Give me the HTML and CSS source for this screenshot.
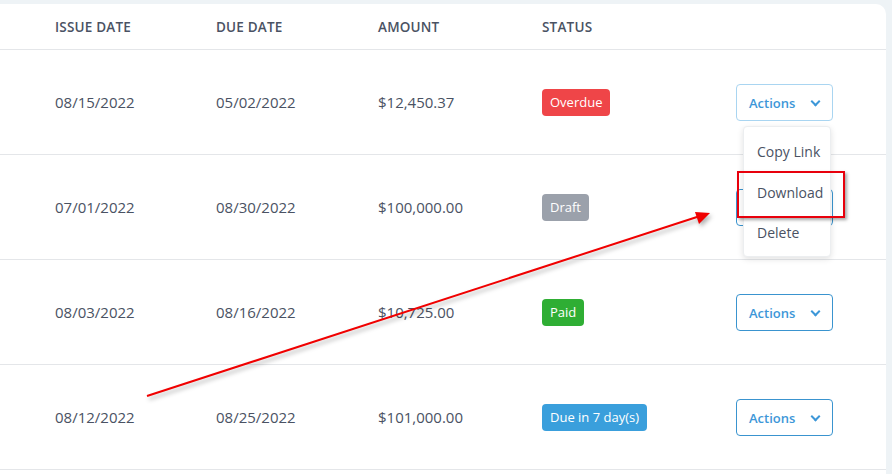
FILE: index.html
```html
<!DOCTYPE html>
<html>
<head>
  <title>invoices</title>
  <link rel="stylesheet" href="styles.css">
</head>
<body>

  <div class="card">
    <div class="row head">
      <div>Issue Date</div>
      <div>Due Date</div>
      <div>Amount</div>
      <div>Status</div>
      <div></div>
    </div>

    <div class="row">
      <div>08/15/2022</div>
      <div>05/02/2022</div>
      <div>$12,450.37</div>
      <div><span class="badge overdue">Overdue</span></div>
      <div class="actions-cell">
        <button class="actions open">Actions <span class="chev"></span></button>
        <!-- open menu -->
        <div class="menu">
          <div class="menu-item">Copy Link</div>
          <div class="menu-item">Download</div>
          <div class="menu-item">Delete</div>
        </div>
      </div>
    </div>

    <div class="row">
      <div>07/01/2022</div>
      <div>08/30/2022</div>
      <div>$100,000.00</div>
      <div><span class="badge draft">Draft</span></div>
      <div class="actions-cell">
        <button class="actions">Actions <span class="chev"></span></button>
      </div>
    </div>

    <div class="row">
      <div>08/03/2022</div>
      <div>08/16/2022</div>
      <div>$10,725.00</div>
      <div><span class="badge paid">Paid</span></div>
      <div class="actions-cell">
        <button class="actions">Actions <span class="chev"></span></button>
      </div>
    </div>

    <div class="row">
      <div>08/12/2022</div>
      <div>08/25/2022</div>
      <div>$101,000.00</div>
      <div><span class="badge due">Due in 7 day(s)</span></div>
      <div class="actions-cell">
        <button class="actions">Actions <span class="chev"></span></button>
      </div>
    </div>
  </div>

  <!-- screenshot annotations -->
  <div class="mark"></div>
  <svg class="arrow" width="892" height="474" viewBox="0 0 892 474">
    <line x1="147" y1="396" x2="700" y2="216" stroke="#f00000" stroke-width="2"/>
    <polygon points="710,213 695,212 699,224" fill="#f00000"/>
  </svg>

</body>
</html>
```

FILE: styles.css
```css
body {
  margin: 0;
  background-color: #eef3f6;
  font-family: "Open Sans", Arial, sans-serif;
  color: #4a5263;
  position: relative;
  height: 474px;
  overflow: hidden;
}

.card {
  background-color: #ffffff;
  margin: 4px 6px 0 -10px;
  padding-left: 10px;
  border-top-right-radius: 10px;
  height: 470px;
}

.row {
  display: grid;
  grid-template-columns: 161px 162px 164px 194px 100px;
  align-items: center;
  padding-left: 55px;
  height: 104px;
  border-bottom: 1px solid #e4e6e9;
  font-size: 15px;
}

.row.head {
  height: 44px;
  font-size: 13.5px;
  font-weight: 600;
  text-transform: uppercase;
  letter-spacing: 0.2px;
  padding-top: 1px;
}

.badge {
  display: inline-block;
  height: 27px;
  line-height: 27px;
  padding: 0 8px;
  border-radius: 4px;
  color: #ffffff;
  font-size: 13px;
}

.overdue { background-color: #ef4548; }
.draft { background-color: #9ba1ab; }
.paid { background-color: #2fae34; }
.due { background-color: #3a9fdc; }

.actions-cell {
  position: relative;
}

.actions {
  width: 97px;
  height: 37px;
  background-color: #ffffff;
  border: 1px solid #3a94cf;
  border-radius: 4px;
  color: #3d97d8;
  font-family: "Open Sans", Arial, sans-serif;
  font-size: 13px;
  font-weight: 600;
  text-align: left;
  padding: 0 0 0 12px;
  margin-top: 1px;
}

.actions.open {
  border-color: #a9d5f1;
}

.chev {
  display: inline-block;
  width: 5px;
  height: 5px;
  border-right: 2.5px solid #3d97d8;
  border-bottom: 2.5px solid #3d97d8;
  transform: rotate(45deg);
  margin-left: 13px;
  position: relative;
  top: -3px;
}

.menu {
  position: absolute;
  top: 43px;
  left: 7px;
  width: 88px;
  height: 131px;
  background-color: #ffffff;
  border: 1px solid #eceef0;
  border-radius: 4px;
  box-shadow: 0 2px 6px rgba(0, 0, 0, 0.12);
  box-sizing: border-box;
  padding-top: 15px;
  z-index: 2;
}

.menu-item {
  height: 40.5px;
  padding-left: 13px;
  font-size: 14px;
  color: #4a5263;
}

.mark {
  position: absolute;
  left: 737px;
  top: 171px;
  width: 104px;
  height: 43px;
  border: 2px solid #e8000c;
  box-shadow: 2px 2px 3px rgba(0, 0, 0, 0.35);
  z-index: 3;
}

.arrow {
  position: absolute;
  left: 0;
  top: 0;
  z-index: 3;
  filter: drop-shadow(2px 3px 2px rgba(0, 0, 0, 0.3));
}
```
